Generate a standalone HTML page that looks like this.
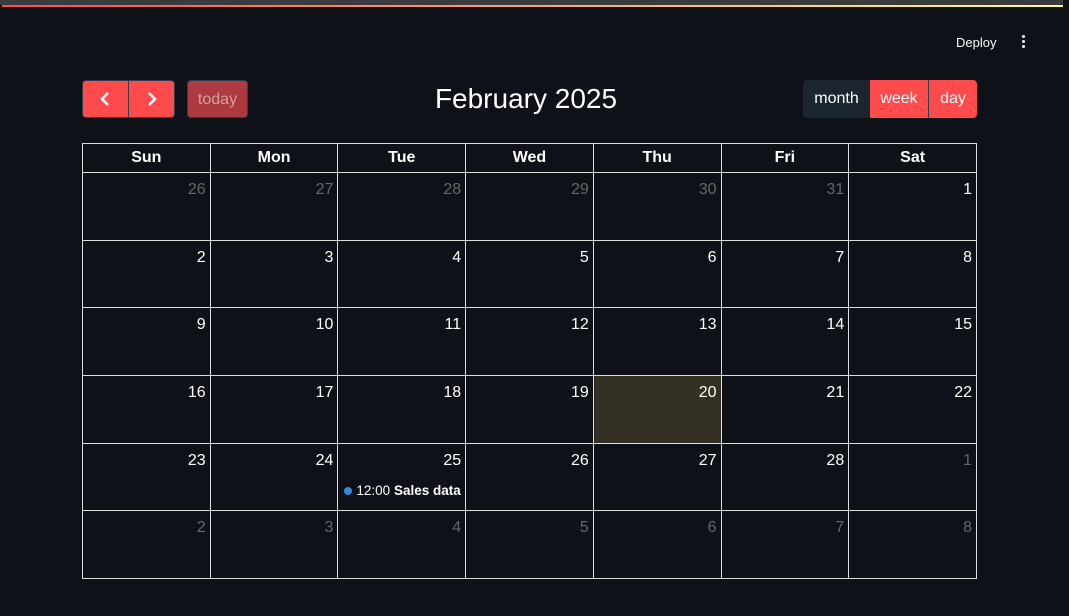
<!DOCTYPE html>
<html><head><style>
body{margin:0;width:1069px;height:616px;background:#0e1117;font-family:"Liberation Sans",sans-serif;color:#fff;position:relative;overflow:hidden}
.top{position:absolute;left:0;top:0;width:1063px;height:5px;background:#3a3b3f}
.grad{position:absolute;left:2px;top:5px;width:1061px;height:2px;background:linear-gradient(90deg,#ff4b4b,#fffd80)}
.deploy{position:absolute;left:956px;top:35px;font-size:13px;color:#fafafa}
.dots{position:absolute;left:1022px;top:35px;width:4px}
.dots i{display:block;width:3px;height:3px;border-radius:50%;background:#fafafa;margin-bottom:2px}
.btn{position:absolute;top:80px;height:38px;box-sizing:border-box;font-size:16px;line-height:37px;text-align:center}
table{position:absolute;left:82px;top:143px;border-collapse:collapse;table-layout:fixed;width:895px}
td,th{border:1px solid #ddd;padding:0}
th{height:28px;font-size:16px;font-weight:bold}
td{height:66.7px;vertical-align:top;text-align:right;font-size:16px}
td span{display:block;padding:8px 4px 0 0}
.o{color:#666}
.today{background:#343024}
.ev{text-align:left;font-size:13.5px;margin:13px 0 0 6px;white-space:nowrap}
.ev b{font-weight:bold}
.ev i{display:inline-block;width:8px;height:8px;border-radius:50%;background:#3788d8;margin-right:4px}
</style></head><body>
<div class="top"></div><div class="grad"></div>
<div class="deploy">Deploy</div>
<div class="dots"><i></i><i></i><i></i></div>
<div class="btn" style="left:82px;width:93px;background:#ff4b4b;border:1px solid #2c3e50;border-radius:4px"></div>
<div style="position:absolute;left:128px;top:80px;width:1px;height:38px;background:#2c3e50"></div>
<svg style="position:absolute;left:98px;top:90px" width="16" height="18"><path d="M10 3L4 9l6 6" stroke="#fff" stroke-width="2.5" fill="none"/></svg>
<svg style="position:absolute;left:144px;top:90px" width="16" height="18"><path d="M5 3l6 6-6 6" stroke="#fff" stroke-width="2.5" fill="none"/></svg>
<div class="btn" style="left:187px;width:61px;background:#ad3a40;color:#d6a0a0;border:1px solid #2c3e50;border-radius:4px">today</div>
<div style="position:absolute;left:0;width:1052px;top:83px;text-align:center;font-size:28px">February 2025</div>
<div class="btn" style="left:803px;width:67px;background:#1b2631;border-radius:4px 0 0 4px">month</div>
<div class="btn" style="left:870px;width:59px;background:#ff4b4b;border-right:1px solid #2c3e50">week</div>
<div class="btn" style="left:929px;width:48px;background:#ff4b4b;border-radius:0 4px 4px 0">day</div>
<table>
<tr><th>Sun</th><th>Mon</th><th>Tue</th><th>Wed</th><th>Thu</th><th>Fri</th><th>Sat</th></tr>
<tr><td class="o"><span>26</span></td><td class="o"><span>27</span></td><td class="o"><span>28</span></td><td class="o"><span>29</span></td><td class="o"><span>30</span></td><td class="o"><span>31</span></td><td><span>1</span></td></tr>
<tr><td><span>2</span></td><td><span>3</span></td><td><span>4</span></td><td><span>5</span></td><td><span>6</span></td><td><span>7</span></td><td><span>8</span></td></tr>
<tr><td><span>9</span></td><td><span>10</span></td><td><span>11</span></td><td><span>12</span></td><td><span>13</span></td><td><span>14</span></td><td><span>15</span></td></tr>
<tr><td><span>16</span></td><td><span>17</span></td><td><span>18</span></td><td><span>19</span></td><td class="today"><span>20</span></td><td><span>21</span></td><td><span>22</span></td></tr>
<tr><td><span>23</span></td><td><span>24</span></td><td><span>25</span><div class="ev"><i></i>12:00 <b>Sales data</b></div></td><td><span>26</span></td><td><span>27</span></td><td><span>28</span></td><td class="o"><span>1</span></td></tr>
<tr><td class="o"><span>2</span></td><td class="o"><span>3</span></td><td class="o"><span>4</span></td><td class="o"><span>5</span></td><td class="o"><span>6</span></td><td class="o"><span>7</span></td><td class="o"><span>8</span></td></tr>
</table>
</body></html>
